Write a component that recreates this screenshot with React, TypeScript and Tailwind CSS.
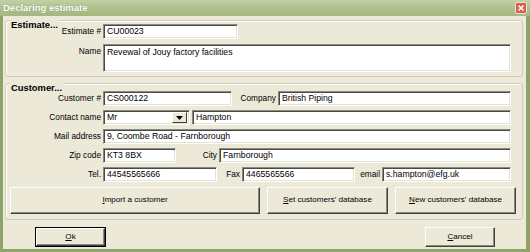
import React from "react";

const sunken =
  "bg-white border border-t-[#8c8a80] border-l-[#8c8a80] border-b-[#ffffff] border-r-[#ffffff] shadow-[inset_1px_1px_0_#4a4a44,inset_-1px_-1px_0_#e4e2d6]";

function Field({ w, value, h = "h-[15px]" }: { w: string; value: string; h?: string }) {
  return (
    <div className={`${w} ${h} ${sunken} pl-[3px] flex items-center text-[8.7px] text-black leading-none whitespace-nowrap overflow-hidden`}>
      {value}
    </div>
  );
}

function Label({ w, children }: { w: string; children: React.ReactNode }) {
  return (
    <div className={`${w} text-right text-[8.3px] text-black leading-none whitespace-nowrap`}>{children}</div>
  );
}

function Btn({ w, h, children, def }: { w: string; h: string; children: React.ReactNode; def?: boolean }) {
  const inner = (
    <div className="w-full h-full bg-[#ece9d8] border border-t-[#ffffff] border-l-[#ffffff] border-b-[#404040] border-r-[#404040] shadow-[inset_-1px_-1px_0_#8c8a80] flex items-center justify-center text-[8.1px] text-black leading-none">
      {children}
    </div>
  );
  if (def) {
    return <div className={`${w} ${h} border border-black`}>{inner}</div>;
  }
  return <div className={`${w} ${h}`}>{inner}</div>;
}

function Group({ title, children, className }: { title: string; children: React.ReactNode; className: string }) {
  return (
    <div className={`relative border border-[#cfccbd] rounded-[3px] shadow-[inset_1px_1px_0_#ffffff] ${className}`}>
      <span className="absolute left-[4px] top-[-1px] bg-[#ece9d8] pl-[1px] pr-[2px] text-[9.4px] font-bold leading-[10px] text-black">
        {title}
      </span>
      {children}
    </div>
  );
}

export default function App() {
  return (
    <div
      className="w-[530px] h-[252px] bg-[#8da46a] flex flex-col overflow-hidden"
      style={{ fontFamily: '"Liberation Sans", Arial, sans-serif' }}
    >
      {/* Title bar */}
      <div className="h-[16px] bg-gradient-to-b from-[#c4d1a6] via-[#afc08b] to-[#a5b77f] flex items-center justify-between pl-[3px] pr-[3px]">
        <span className="text-[9.5px] font-bold text-white leading-none [text-shadow:0_0_1px_#6f8552]">Declaring estimate</span>
        <div className="w-[12px] h-[12px] rounded-[2px] bg-[#d2604f] border border-[#f2e0d8] flex items-center justify-center">
          <svg width="8" height="8" viewBox="0 0 8 8">
            <path d="M1.5 1.5 L6.5 6.5 M6.5 1.5 L1.5 6.5" stroke="#ffffff" strokeWidth="1.6" />
          </svg>
        </div>
      </div>

      {/* Body */}
      <div className="flex-1 ml-[3px] mr-[4px] mb-[3px] bg-[#ece9d8] flex flex-col pt-[4px]">
        <Group title="Estimate..." className="ml-[2px] w-[518px] pt-[3px] pb-[4px] flex flex-col gap-[5px]">
          <div className="flex items-center gap-[2px]">
            <Label w="w-[95px]">Estimate #</Label>
            <Field w="w-[135px]" value="CU00023" />
          </div>
          <div className="flex items-start gap-[2px]">
            <Label w="w-[95px] pt-[3px]">Name</Label>
            <div className={`w-[408px] h-[28px] ${sunken} pl-[3px] pt-[3px] text-[8.7px] leading-none text-black`}>
              Revewal of Jouy factory facilities
            </div>
          </div>
        </Group>

        <Group title="Customer..." className="ml-[2px] mt-[6px] w-[518px] pt-[7px] pb-[5px] flex flex-col gap-[4px]">
          <div className="flex items-center gap-[2px]">
            <Label w="w-[95px]">Customer #</Label>
            <Field w="w-[129px]" value="CS000122" />
            <Label w="w-[42px]">Company</Label>
            <Field w="w-[233px]" value="British Piping" />
          </div>
          <div className="flex items-center gap-[2px]">
            <Label w="w-[95px]">Contact name</Label>
            <div className={`w-[87px] h-[15px] ${sunken} pl-[3px] pr-[2px] flex items-center justify-between text-[8.7px] leading-none text-black`}>
              <span>Mr</span>
              <div className="w-[15px] h-[11px] bg-[#ece9d8] border border-t-[#ffffff] border-l-[#ffffff] border-b-[#404040] border-r-[#404040] flex items-center justify-center">
                <svg width="7" height="4" viewBox="0 0 7 4">
                  <path d="M0 0 H7 L3.5 4 Z" fill="#000" />
                </svg>
              </div>
            </div>
            <Field w="w-[319px]" value="Hampton" />
          </div>
          <div className="flex items-center gap-[2px]">
            <Label w="w-[95px]">Mail address</Label>
            <Field w="w-[408px]" value="9, Coombe Road - Farnborough" />
          </div>
          <div className="flex items-center gap-[2px]">
            <Label w="w-[95px]">Zip code</Label>
            <Field w="w-[73px]" value="KT3 8BX" />
            <Label w="w-[39px]">City</Label>
            <Field w="w-[292px]" value="Farnborough" />
          </div>
          <div className="flex items-center gap-[2px]">
            <Label w="w-[95px]">Tel.</Label>
            <Field w="w-[114px]" value="44545565666" />
            <Label w="w-[21px]">Fax</Label>
            <Field w="w-[113px]" value="4465565566" />
            <Label w="w-[23px]">email</Label>
            <Field w="w-[129px]" value="s.hampton@efg.uk" />
          </div>
          <div className="flex items-center gap-[7px] pl-[4px] mt-[1px]">
            <Btn w="w-[250px]" h="h-[27px]">
              <span><span className="underline">I</span>mport a customer</span>
            </Btn>
            <Btn w="w-[121px]" h="h-[27px]">
              <span><span className="underline">S</span>et customers' database</span>
            </Btn>
            <Btn w="w-[121px]" h="h-[27px]">
              <span><span className="underline">N</span>ew customers' database</span>
            </Btn>
          </div>
        </Group>

        <div className="flex justify-between pl-[32px] pr-[31px] mt-[7px]">
          <Btn w="w-[71px]" h="h-[20px]" def>
            <span><span className="underline">O</span>k</span>
          </Btn>
          <Btn w="w-[70px]" h="h-[20px]">
            <span><span className="underline">C</span>ancel</span>
          </Btn>
        </div>
      </div>
    </div>
  );
}
